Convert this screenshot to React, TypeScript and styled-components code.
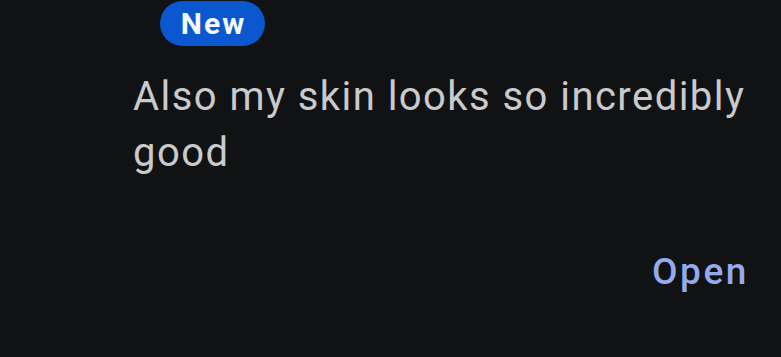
import React from 'react';
import styled, {createGlobalStyle} from "styled-components";

const GlobalStyle = createGlobalStyle`
    html, body {
        margin: 0;
        padding: 0;
        background-color: #111213;
    }
`

export default function App() {
    return (
        <>
            <GlobalStyle/>
            <StyledCard>
                <Badge>New</Badge>
                <Message>Also my skin looks so incredibly good</Message>
                <Actions>
                    <OpenButton>Open</OpenButton>
                </Actions>
            </StyledCard>
        </>
    );
}

const StyledCard = styled.section`
    width: 781px;
    height: 357px;
    box-sizing: border-box;
    padding: 1px 34px 0 133px;
    background-color: #111213;
    font-family: Roboto, "Noto Sans", sans-serif;
    display: flex;
    flex-direction: column;
    align-items: flex-start;
`

const Badge = styled.span`
    margin-left: 27px;
    height: 45px;
    width: 105px;
    box-sizing: border-box;
    padding-left: 2px;
    display: flex;
    align-items: center;
    justify-content: center;
    border-radius: 23px;
    background-color: #0b57d0;
    color: #f4f8ff;
    font-weight: 700;
    font-size: 30px;
    letter-spacing: 2px;
`

const Message = styled.p`
    margin: 23px 0 0;
    max-width: 630px;
    color: #c9cacc;
    font-weight: 400;
    font-size: 40px;
    line-height: 56px;
    letter-spacing: 1.45px;
`

const Actions = styled.div`
    align-self: stretch;
    display: flex;
    justify-content: flex-end;
    margin-top: 69px;
`

const OpenButton = styled.button`
    background: none;
    border: none;
    padding: 0;
    margin-right: -2px;
    color: #93aaec;
    font-family: inherit;
    font-weight: 500;
    font-size: 37px;
    letter-spacing: 2.6px;
    cursor: pointer;
`
